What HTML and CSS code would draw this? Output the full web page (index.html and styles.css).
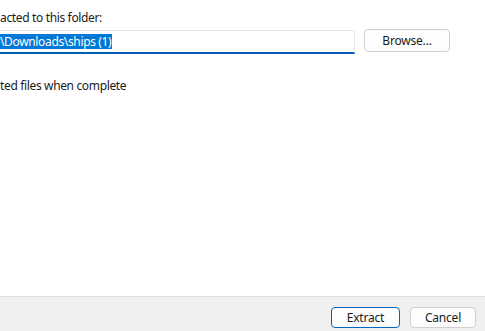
FILE: index.html
```html
<!DOCTYPE html>
<html lang="en">
<head>
    <meta charset="UTF-8">
    <meta name="viewport" content="width=device-width, initial-scale=1.0">
    <title>Extract Compressed (Zipped) Folders</title>
    <link rel="stylesheet" href="styles.css">
</head>
<body>
    <div class="main">
        <label class="caption" for="dest">acted to this folder:</label>
        <div class="dest-row">
            <div class="path-box" id="dest">
                <span class="selected">\Downloads\ships (1)</span>
            </div>
            <button class="btn browse" type="button">Browse...</button>
        </div>
        <div class="show-files">ted files when complete</div>
    </div>

    <div class="footer">
        <button class="btn primary" type="button">Extract</button>
        <button class="btn cancel" type="button">Cancel</button>
    </div>
</body>
</html>
```

FILE: styles.css
```css
body {
    margin: 0;
    height: 331px;
    display: flex;
    flex-direction: column;
    background-color: #ffffff;
    color: #1b1b1b;
    font-family: "Noto Sans", "Open Sans", sans-serif;
    font-size: 12px;
    letter-spacing: -0.35px;
    overflow: hidden;
}
.main {
    flex: 1;
    display: flex;
    flex-direction: column;
    padding-top: 10px;
}
.caption {
    line-height: 16px;
    height: 16px;
}
.dest-row {
    display: flex;
    align-items: flex-start;
    gap: 9px;
    margin-top: 3px;
}
.path-box {
    width: 354px;
    height: 21px;
    border: 1px solid #e5e5e5;
    border-left: none;
    border-bottom: 2px solid #005fb8;
    display: flex;
    align-items: center;
    margin-top: 1px;
}
.selected {
    background-color: #0078d7;
    color: #ffffff;
    line-height: 15px;
    height: 15px;
    padding-right: 1px;
}
.btn {
    font-family: "Noto Sans", "Open Sans", sans-serif;
    font-size: 12px;
    letter-spacing: -0.2px;
    color: #1b1b1b;
    background-color: #fdfdfd;
    border: 1px solid #d0d0d0;
    border-radius: 4px;
    padding: 0;
    cursor: pointer;
}
.browse {
    width: 86px;
    height: 23px;
}
.show-files {
    margin-top: 24px;
    line-height: 16px;
}
.footer {
    height: 35px;
    box-sizing: border-box;
    border-top: 1px solid #dfdfdf;
    background-color: #f0f0f0;
    display: flex;
    justify-content: flex-end;
    align-items: flex-start;
    gap: 10px;
    padding: 10px 9px 0 0;
}
.primary {
    width: 69px;
    height: 21px;
    border-color: #0067c0;
}
.cancel {
    width: 66px;
    height: 21px;
}
```
